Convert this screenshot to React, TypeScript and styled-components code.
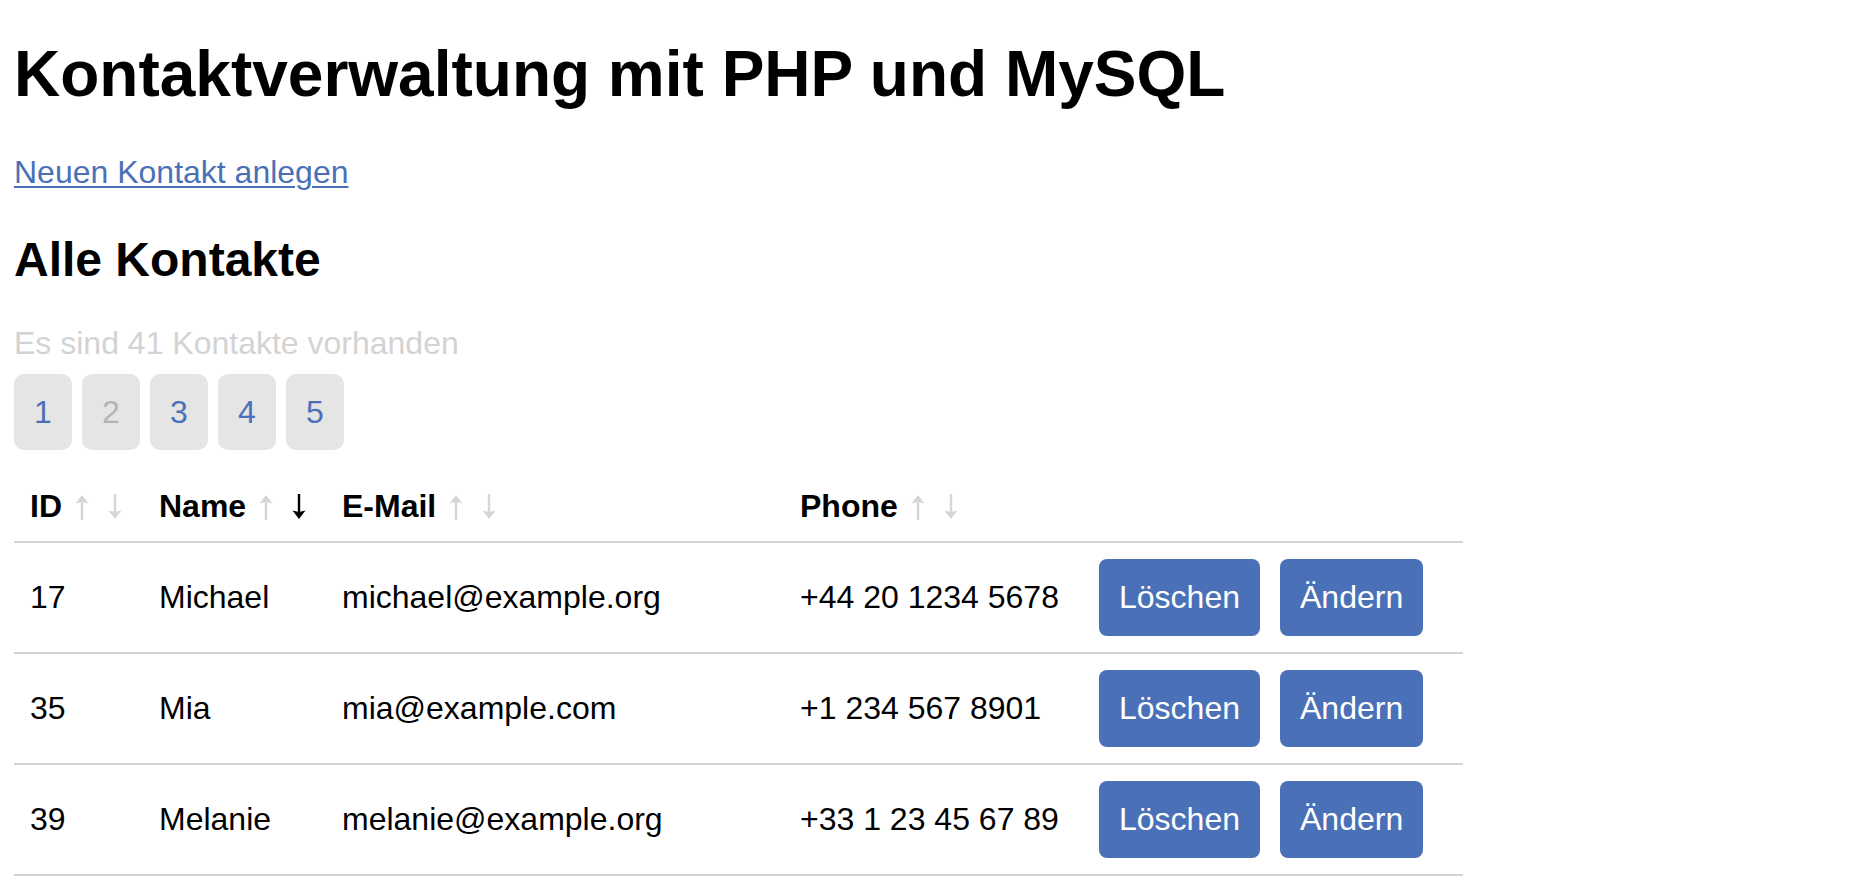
import styled, { createGlobalStyle } from "styled-components";

type Contact = { id: number; name: string; email: string; phone: string };

const CONTACTS: Contact[] = [
  { id: 17, name: "Michael", email: "michael@example.org", phone: "+44 20 1234 5678" },
  { id: 35, name: "Mia", email: "mia@example.com", phone: "+1 234 567 8901" },
  { id: 39, name: "Melanie", email: "melanie@example.org", phone: "+33 1 23 45 67 89" },
];

const COLUMNS: { label: string; width: number; sort: "asc" | "desc" | null }[] = [
  { label: "ID", width: 129, sort: null },
  { label: "Name", width: 183, sort: "desc" },
  { label: "E-Mail", width: 458, sort: null },
  { label: "Phone", width: 299, sort: null },
];

const PAGES = [1, 2, 3, 4, 5];
const CURRENT_PAGE = 2;

const BLUE = "#4a71b7";

const GlobalStyle = createGlobalStyle`
  body {
    margin: 0;
    background: #fff;
    color: #000;
    font-family: "Liberation Sans", Arial, Helvetica, sans-serif;
  }
`;

const Page = styled.div`
  padding: 0 14px;
`;

const Title = styled.h1`
  font-size: 64px;
  line-height: 74px;
  font-weight: 700;
  margin: 37px 0 0;
`;

const NewLink = styled.a`
  display: block;
  margin-top: 43px;
  font-size: 32px;
  line-height: 37px;
  color: ${BLUE};
  text-decoration: underline;
  text-decoration-thickness: 2px;
  text-underline-offset: 3px;
  width: fit-content;
`;

const SectionTitle = styled.h2`
  font-size: 48px;
  line-height: 55px;
  font-weight: 700;
  margin: 41px 0 0;
`;

const Count = styled.p`
  margin: 38px 0 0;
  font-size: 32px;
  line-height: 37px;
  color: #d3d3d3;
`;

const Pagination = styled.div`
  display: flex;
  gap: 10px;
  margin-top: 12px;
`;

const PageButton = styled.a<{ $current: boolean }>`
  display: block;
  padding: 20px;
  width: 18px;
  text-align: center;
  font-size: 32px;
  line-height: 36px;
  border-radius: 10px;
  background: #e5e5e5;
  color: ${(p) => (p.$current ? "#b3b3b3" : BLUE)};
  text-decoration: none;
`;

const Table = styled.table`
  margin-top: 22px;
  border-collapse: collapse;
  table-layout: fixed;
  width: 1449px;
  font-size: 32px;
  line-height: 37px;
`;

const HeadCell = styled.th<{ $width: number }>`
  box-sizing: border-box;
  width: ${(p) => p.$width}px;
  padding: 16px;
  text-align: left;
  font-weight: 700;
  white-space: nowrap;
  border-bottom: 2px solid #d3d3d3;
`;

const Row = styled.tr`
  border-bottom: 2px solid #d3d3d3;
`;

const Cell = styled.td`
  padding: 16px;
  vertical-align: middle;
  white-space: nowrap;
`;

const Actions = styled.div`
  display: flex;
  gap: 20px;
`;

const ActionButton = styled.button`
  padding: 20px;
  border: none;
  border-radius: 8px;
  background: ${BLUE};
  color: #fff;
  font-family: inherit;
  font-size: 32px;
  line-height: 37px;
  cursor: pointer;
`;

const ArrowIcon = styled.svg<{ $active: boolean }>`
  display: inline-block;
  vertical-align: -3px;
  margin-left: 12px;
  color: ${(p) => (p.$active ? "#000" : "#d6d6d6")};
  & + & {
    margin-left: 17px;
  }
`;

function SortArrow({ dir, active }: { dir: "up" | "down"; active: boolean }) {
  return (
    <ArrowIcon $active={active} width="16" height="26" viewBox="0 0 16 26">
      <g transform={dir === "down" ? "rotate(180 8 13)" : undefined} fill="currentColor">
        <rect x="6.8" y="6" width="2.4" height="20" />
        <path d="M8 1 L14.5 9.5 L8 8 L1.5 9.5 Z" />
      </g>
    </ArrowIcon>
  );
}

export default function App() {
  return (
    <Page>
      <GlobalStyle />
      <Title>Kontaktverwaltung mit PHP und MySQL</Title>
      <NewLink href="#">Neuen Kontakt anlegen</NewLink>
      <SectionTitle>Alle Kontakte</SectionTitle>
      <Count>Es sind 41 Kontakte vorhanden</Count>
      <Pagination>
        {PAGES.map((n) => (
          <PageButton key={n} href="#" $current={n === CURRENT_PAGE}>
            {n}
          </PageButton>
        ))}
      </Pagination>
      <Table>
        <thead>
          <tr>
            {COLUMNS.map((col) => (
              <HeadCell key={col.label} $width={col.width}>
                {col.label}
                <SortArrow dir="up" active={col.sort === "asc"} />
                <SortArrow dir="down" active={col.sort === "desc"} />
              </HeadCell>
            ))}
            <HeadCell $width={380} />
          </tr>
        </thead>
        <tbody>
          {CONTACTS.map((c) => (
            <Row key={c.id}>
              <Cell>{c.id}</Cell>
              <Cell>{c.name}</Cell>
              <Cell>{c.email}</Cell>
              <Cell>{c.phone}</Cell>
              <Cell>
                <Actions>
                  <ActionButton>Löschen</ActionButton>
                  <ActionButton>Ändern</ActionButton>
                </Actions>
              </Cell>
            </Row>
          ))}
        </tbody>
      </Table>
    </Page>
  );
}
